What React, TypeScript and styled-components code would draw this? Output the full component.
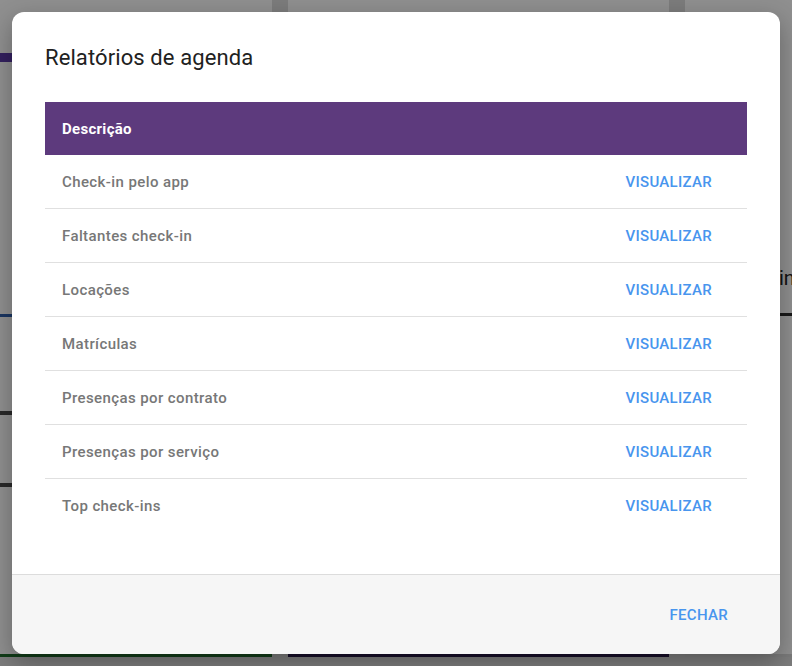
import { FC } from "react";
import styled, { createGlobalStyle } from "styled-components";

const GlobalStyle = createGlobalStyle`
    html, body {
        margin: 0;
        padding: 0;
        width: 792px;
        height: 666px;
        overflow: hidden;
        font-family: Roboto, "Liberation Sans", sans-serif;
    }
    * {
        box-sizing: border-box;
    }
`

const Page = styled.div`
    position: relative;
    width: 792px;
    height: 666px;
    background-color: #dedede;
    display: grid;
    grid-template-columns: 272px 381px 1fr;
    column-gap: 16px;
    overflow: hidden;
`

const PageCard = styled.div<{ $accent: string }>`
    background-color: #ffffff;
    height: 657px;
    border-bottom: 3px solid ${(p) => p.$accent};
    display: flex;
    flex-direction: column;
    overflow: hidden;
`

const PageBar = styled.div<{ $color: string; $top: number; $height: number }>`
    margin-top: ${(p) => p.$top}px;
    width: 100%;
    height: ${(p) => p.$height}px;
    background-color: ${(p) => p.$color};
`

const PageText = styled.div`
    margin-top: 266px;
    padding-left: 94px;
    font-size: 20px;
    line-height: 24px;
    white-space: nowrap;
    color: #222222;
`

const Overlay = styled.div`
    position: absolute;
    inset: 0;
    background-color: rgba(0, 0, 0, 0.44);
`

const Dialog = styled.div`
    position: absolute;
    left: 12px;
    top: 12px;
    width: 768px;
    height: 642px;
    background-color: #ffffff;
    border-radius: 12px;
    box-shadow: 0 8px 24px rgba(0, 0, 0, 0.3);
    display: flex;
    flex-direction: column;
    overflow: hidden;
`

const Body = styled.div`
    flex: 1;
    padding: 33px 33px 0;
    display: flex;
    flex-direction: column;
`

const Title = styled.h2`
    margin: 0 0 31px;
    font-size: 22px;
    line-height: 26px;
    font-weight: 400;
    letter-spacing: 0.1px;
    color: #212121;
`

const Table = styled.div`
    display: flex;
    flex-direction: column;
`

const HeaderRow = styled.div`
    height: 53px;
    background-color: #5d3a7d;
    display: flex;
    align-items: center;
    padding: 0 17px;
    color: #ffffff;
    font-size: 15px;
    font-weight: 700;
    letter-spacing: 0.3px;
`

const Row = styled.div<{ $last?: boolean }>`
    height: 54px;
    display: flex;
    align-items: center;
    justify-content: space-between;
    padding: 0 35px 0 17px;
    border-bottom: 1px solid ${(p) => (p.$last ? "transparent" : "#e0e0e0")};
`

const RowLabel = styled.span`
    font-size: 15px;
    font-weight: 500;
    letter-spacing: 0.4px;
    color: #777777;
`

const LinkButton = styled.button`
    border: none;
    background: none;
    padding: 0;
    font-family: inherit;
    font-size: 15px;
    font-weight: 500;
    letter-spacing: 0.3px;
    text-transform: uppercase;
    color: #4895ee;
    cursor: pointer;
`

const Footer = styled.div`
    height: 80px;
    border-top: 1px solid #dcdcdc;
    background-color: #f6f6f6;
    display: flex;
    align-items: center;
    justify-content: flex-end;
    padding: 0 52px 0 0;
`

const reports = [
    "Check-in pelo app",
    "Faltantes check-in",
    "Locações",
    "Matrículas",
    "Presenças por contrato",
    "Presenças por serviço",
    "Top check-ins",
];

const App: FC = () => {
    return (
        <>
            <GlobalStyle />
            <Page>
                <PageCard $accent="#1f6b2b">
                    <PageBar $color="#5b3aa8" $top={53} $height={9} />
                    <PageBar $color="#2f5fae" $top={252} $height={3} />
                    <PageBar $color="#4a4a4a" $top={94} $height={4} />
                    <PageBar $color="#4a4a4a" $top={68} $height={4} />
                </PageCard>
                <PageCard $accent="#2a1a4a" />
                <PageCard $accent="#d9d9d9">
                    <PageText>in</PageText>
                    <PageBar $color="#2a2a2a" $top={23} $height={3} />
                </PageCard>
                <Overlay />
                <Dialog>
                    <Body>
                        <Title>Relatórios de agenda</Title>
                        <Table>
                            <HeaderRow>Descrição</HeaderRow>
                            {reports.map((r, i) => (
                                <Row key={r} $last={i === reports.length - 1}>
                                    <RowLabel>{r}</RowLabel>
                                    <LinkButton>Visualizar</LinkButton>
                                </Row>
                            ))}
                        </Table>
                    </Body>
                    <Footer>
                        <LinkButton>Fechar</LinkButton>
                    </Footer>
                </Dialog>
            </Page>
        </>
    );
};

export default App;
